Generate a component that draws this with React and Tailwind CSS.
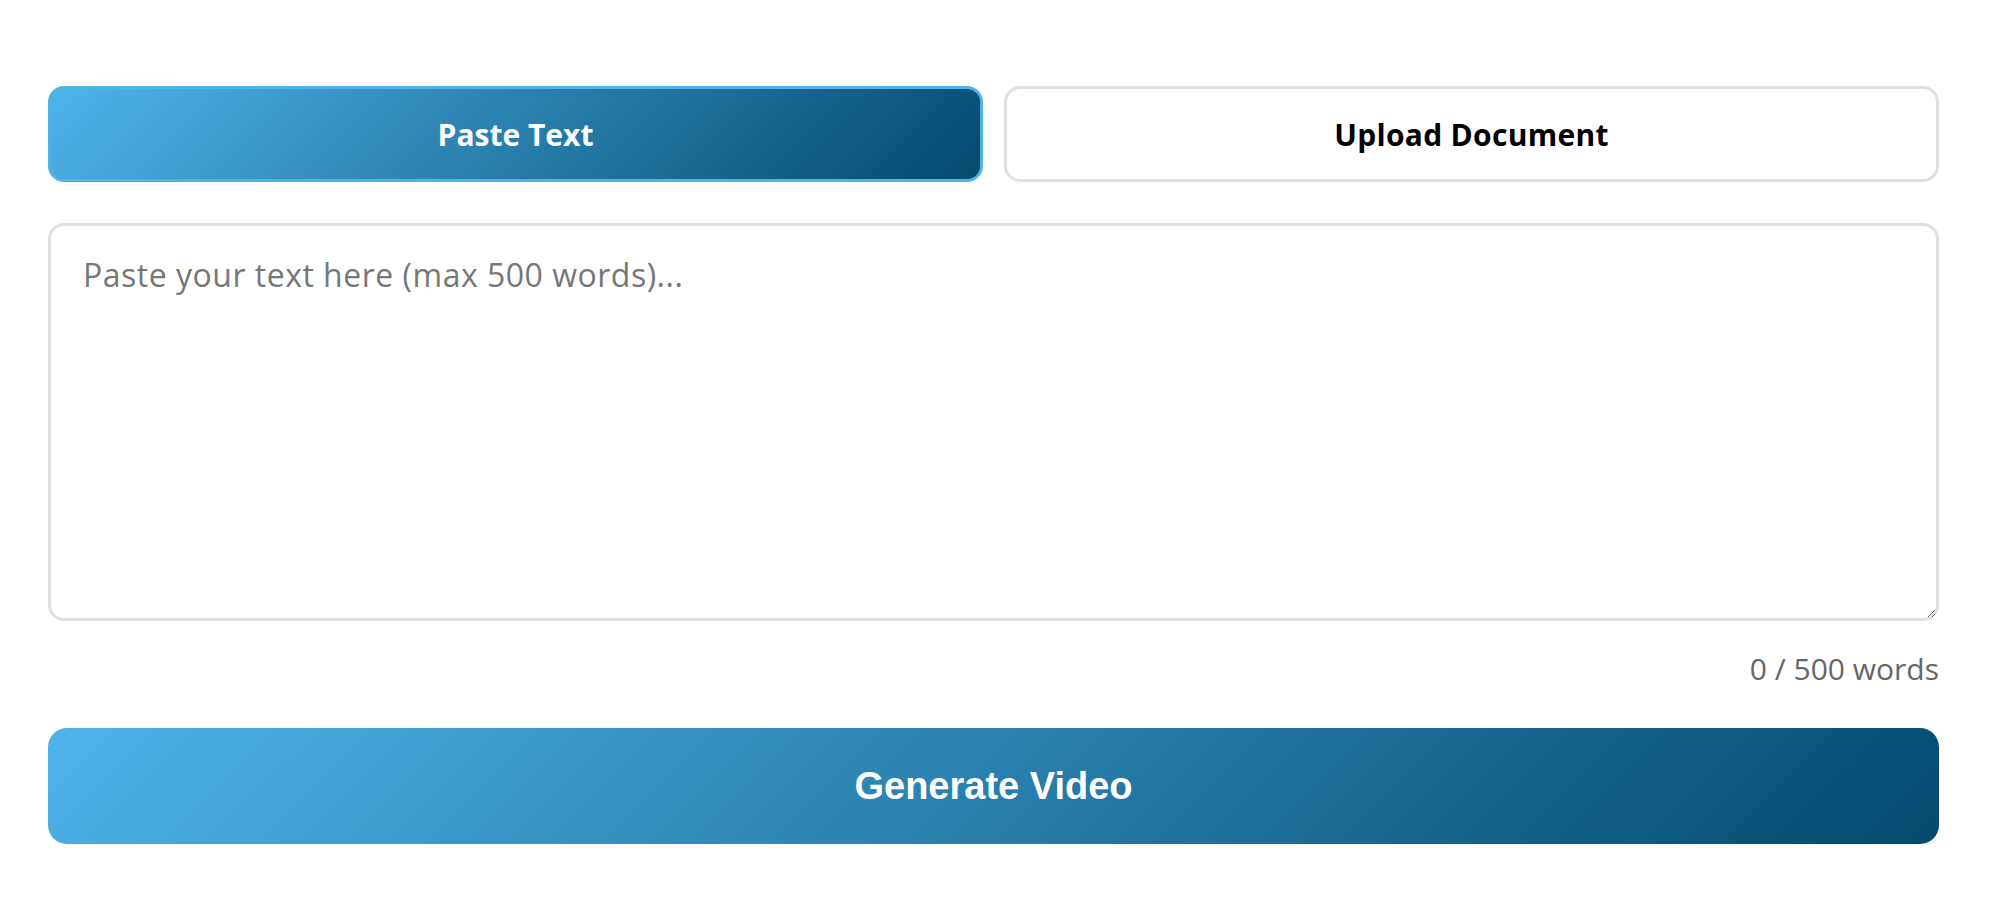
import React, { useState } from "react";

const App = () => {
  const [mode, setMode] = useState("paste");
  const [text, setText] = useState("");

  const words = text.trim() ? text.trim().split(/\s+/).length : 0;

  const tabBase =
    "h-[96px] rounded-[16px] border-[3px] text-[30px] font-bold flex items-center justify-center";
  const active =
    "border-[#4fb3ea] bg-[linear-gradient(135deg,#4fb3ea,#034a6e)] text-white";
  const idle = "border-[#e0e0e0] bg-white text-black";

  return (
    <div className="min-h-screen bg-white pt-[86px] pl-[48px] pr-[57px] font-['Open_Sans','Liberation_Sans',sans-serif]">
      {/* Tabs */}
      <div className="grid grid-cols-2 gap-[21px]">
        <button
          onClick={() => setMode("paste")}
          className={`${tabBase} ${mode === "paste" ? active : idle}`}
        >
          Paste Text
        </button>
        <button
          onClick={() => setMode("upload")}
          className={`${tabBase} ${mode === "upload" ? active : idle} tracking-[0.3px]`}
        >
          Upload Document
        </button>
      </div>

      {/* Text input */}
      <textarea
        value={text}
        onChange={(e) => setText(e.target.value)}
        placeholder="Paste your text here (max 500 words)..."
        className="block w-full mt-[41px] h-[398px] rounded-[16px] border-[3px] border-[#e0e0e0] px-[32px] pt-[29px] pb-[28px] text-[32px] tracking-[0.5px] leading-[40px] text-[#333] placeholder:text-[#777] outline-none"
      />

      <div className="mt-[30px] text-right text-[30px] leading-[36px] text-[#666]">
        {words} / 500 words
      </div>

      {/* Submit */}
      <button className="mt-[41px] w-full h-[116px] rounded-[19px] bg-[linear-gradient(135deg,#4fb3ea,#034a6e)] text-white text-[38px] font-bold font-['Liberation_Sans',Arial,sans-serif]">
        Generate Video
      </button>
    </div>
  );
};

export default App;
